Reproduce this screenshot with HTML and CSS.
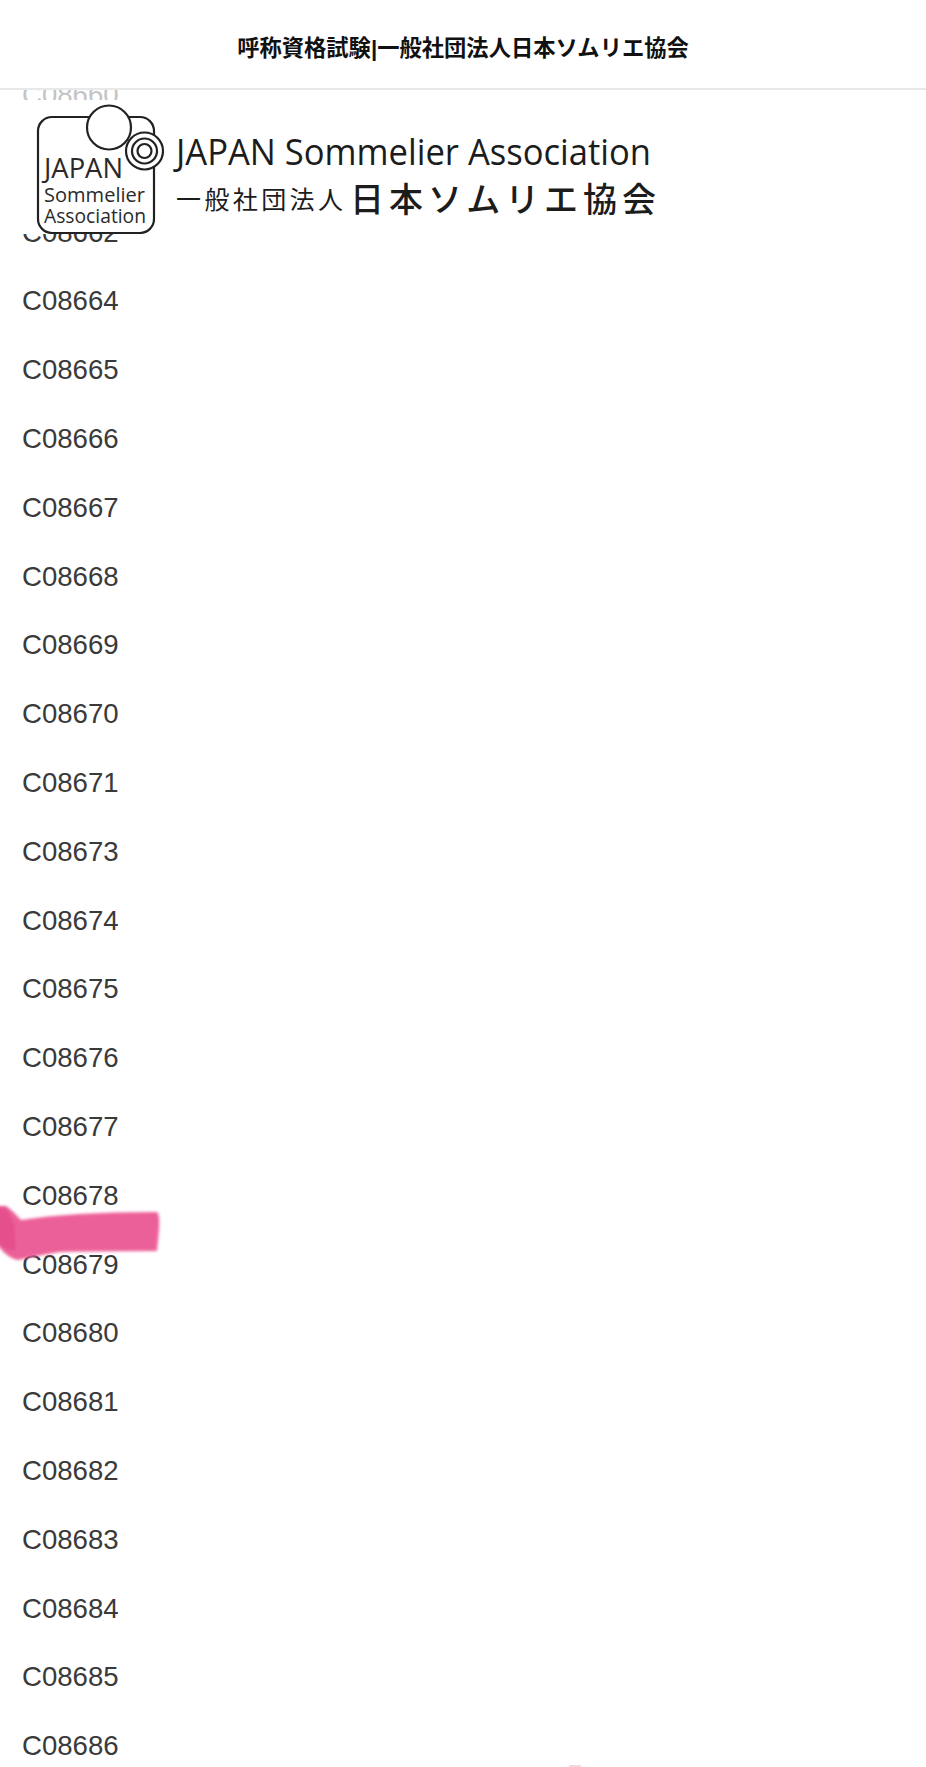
FILE: index.html
```html
<!DOCTYPE html>
<html lang="ja">
<head>
<meta charset="utf-8">
<title>呼称資格試験|一般社団法人日本ソムリエ協会</title>
<link rel="stylesheet" href="styles.css">
</head>
<body>
<header class="topbar"><h1 class="title">呼称資格試験|一般社団法人日本ソムリエ協会</h1></header>
<main class="viewport">
  <ul class="list">
    <li class="row row-faded">C08660</li>
    <li class="row">C08661</li>
    <li class="row">C08662</li>
    <li class="row">C08664</li>
    <li class="row">C08665</li>
    <li class="row">C08666</li>
    <li class="row">C08667</li>
    <li class="row">C08668</li>
    <li class="row">C08669</li>
    <li class="row">C08670</li>
    <li class="row">C08671</li>
    <li class="row">C08673</li>
    <li class="row">C08674</li>
    <li class="row">C08675</li>
    <li class="row">C08676</li>
    <li class="row">C08677</li>
    <li class="row">C08678</li>
    <li class="row">C08679</li>
    <li class="row">C08680</li>
    <li class="row">C08681</li>
    <li class="row">C08682</li>
    <li class="row">C08683</li>
    <li class="row">C08684</li>
    <li class="row">C08685</li>
    <li class="row">C08686</li>
  </ul>
  <svg class="logo" viewBox="0 0 670 134" width="670" height="134">
    <g fill="none" stroke="#222" stroke-width="2.2">
      <rect x="38" y="17" width="116" height="116" rx="14"/>
      <circle cx="109" cy="27.5" r="22" fill="#fff"/>
      <circle cx="144.5" cy="51" r="18.5" fill="#fff"/>
      <circle cx="144.5" cy="51" r="12.5"/>
      <circle cx="144.5" cy="51" r="7"/>
    </g>
    <g class="logo-mark" fill="#2a2a2a">
      <text x="44" y="78" font-size="28" textLength="79" lengthAdjust="spacingAndGlyphs">JAPAN</text>
      <text x="44" y="102" font-size="20.5" textLength="101" lengthAdjust="spacingAndGlyphs">Sommelier</text>
      <text x="44" y="123" font-size="20.5" textLength="102" lengthAdjust="spacingAndGlyphs">Association</text>
    </g>
    <g class="logo-name" fill="#1c1c1c">
      <text x="176" y="65" font-size="37" textLength="475" lengthAdjust="spacingAndGlyphs">JAPAN Sommelier Association</text>
      <text x="176" y="109" font-size="25" textLength="167" class="logo-jp">一般社団法人</text>
      <text x="350" y="112" font-size="34" textLength="306" class="logo-jp-big">日本ソムリエ協会</text>
    </g>
  </svg>
  <svg class="marker" viewBox="0 0 170 70" width="170" height="70">
    <defs><filter id="soft" x="-10%" y="-20%" width="120%" height="140%"><feGaussianBlur stdDeviation="1.8"/></filter></defs>
    <path filter="url(#soft)" fill="#ec6199" d="M-6 6 L6 6 Q12 10 21 20 Q70 12 157 12 Q160 14 159 30 L157 51 Q100 51 60 52 Q35 56 18 60 Q8 58 0 48 L-6 44Z"/>
    <path filter="url(#soft)" fill="#e5508c" d="M-6 8 L5 8 Q10 14 14 24 L16 50 Q8 52 0 44 L-6 40Z"/>
  </svg>
  <span class="speck"></span>
</main>
</body>
</html>
```
FILE: styles.css
```css
* { box-sizing: border-box; }
html, body { margin: 0; padding: 0; background: #fff; }
body { width: 926px; height: 1767px; overflow: hidden; font-family: "Liberation Sans", Arial, sans-serif; }
.topbar { height: 90px; display: flex; align-items: center; justify-content: center; background: #fff; border-bottom: 2px solid #e8e8e8; padding-top: 4px; }
.title { margin: 0; font-size: 22.3px; font-weight: 700; color: #111; font-family: "Liberation Sans", "Noto Sans CJK JP", sans-serif; white-space: nowrap; }
.viewport { position: relative; height: 1677px; overflow: hidden; }
.list { list-style: none; margin: -29px 0 0; padding: 0 0 0 22px; }
.row { height: 68.8px; line-height: 68.8px; font-size: 27.6px; color: #3a3a3a; }
.row-faded { color: #c4c4c4; }
.logo { position: absolute; left: 0; top: 10px; background: #fff; }
.logo text { font-family: "Open Sans", "Noto Sans CJK JP", sans-serif; }
.logo .logo-jp { font-family: "Noto Sans CJK JP", sans-serif; font-weight: 400; }
.logo .logo-jp-big { font-family: "Noto Sans CJK JP", sans-serif; font-weight: 500; }
.marker { position: absolute; left: 0; top: 1110px; }
.speck { position: absolute; left: 569px; top: 1675px; width: 12px; height: 2px; background: #f8d5e2; border-radius: 2px; }
```
